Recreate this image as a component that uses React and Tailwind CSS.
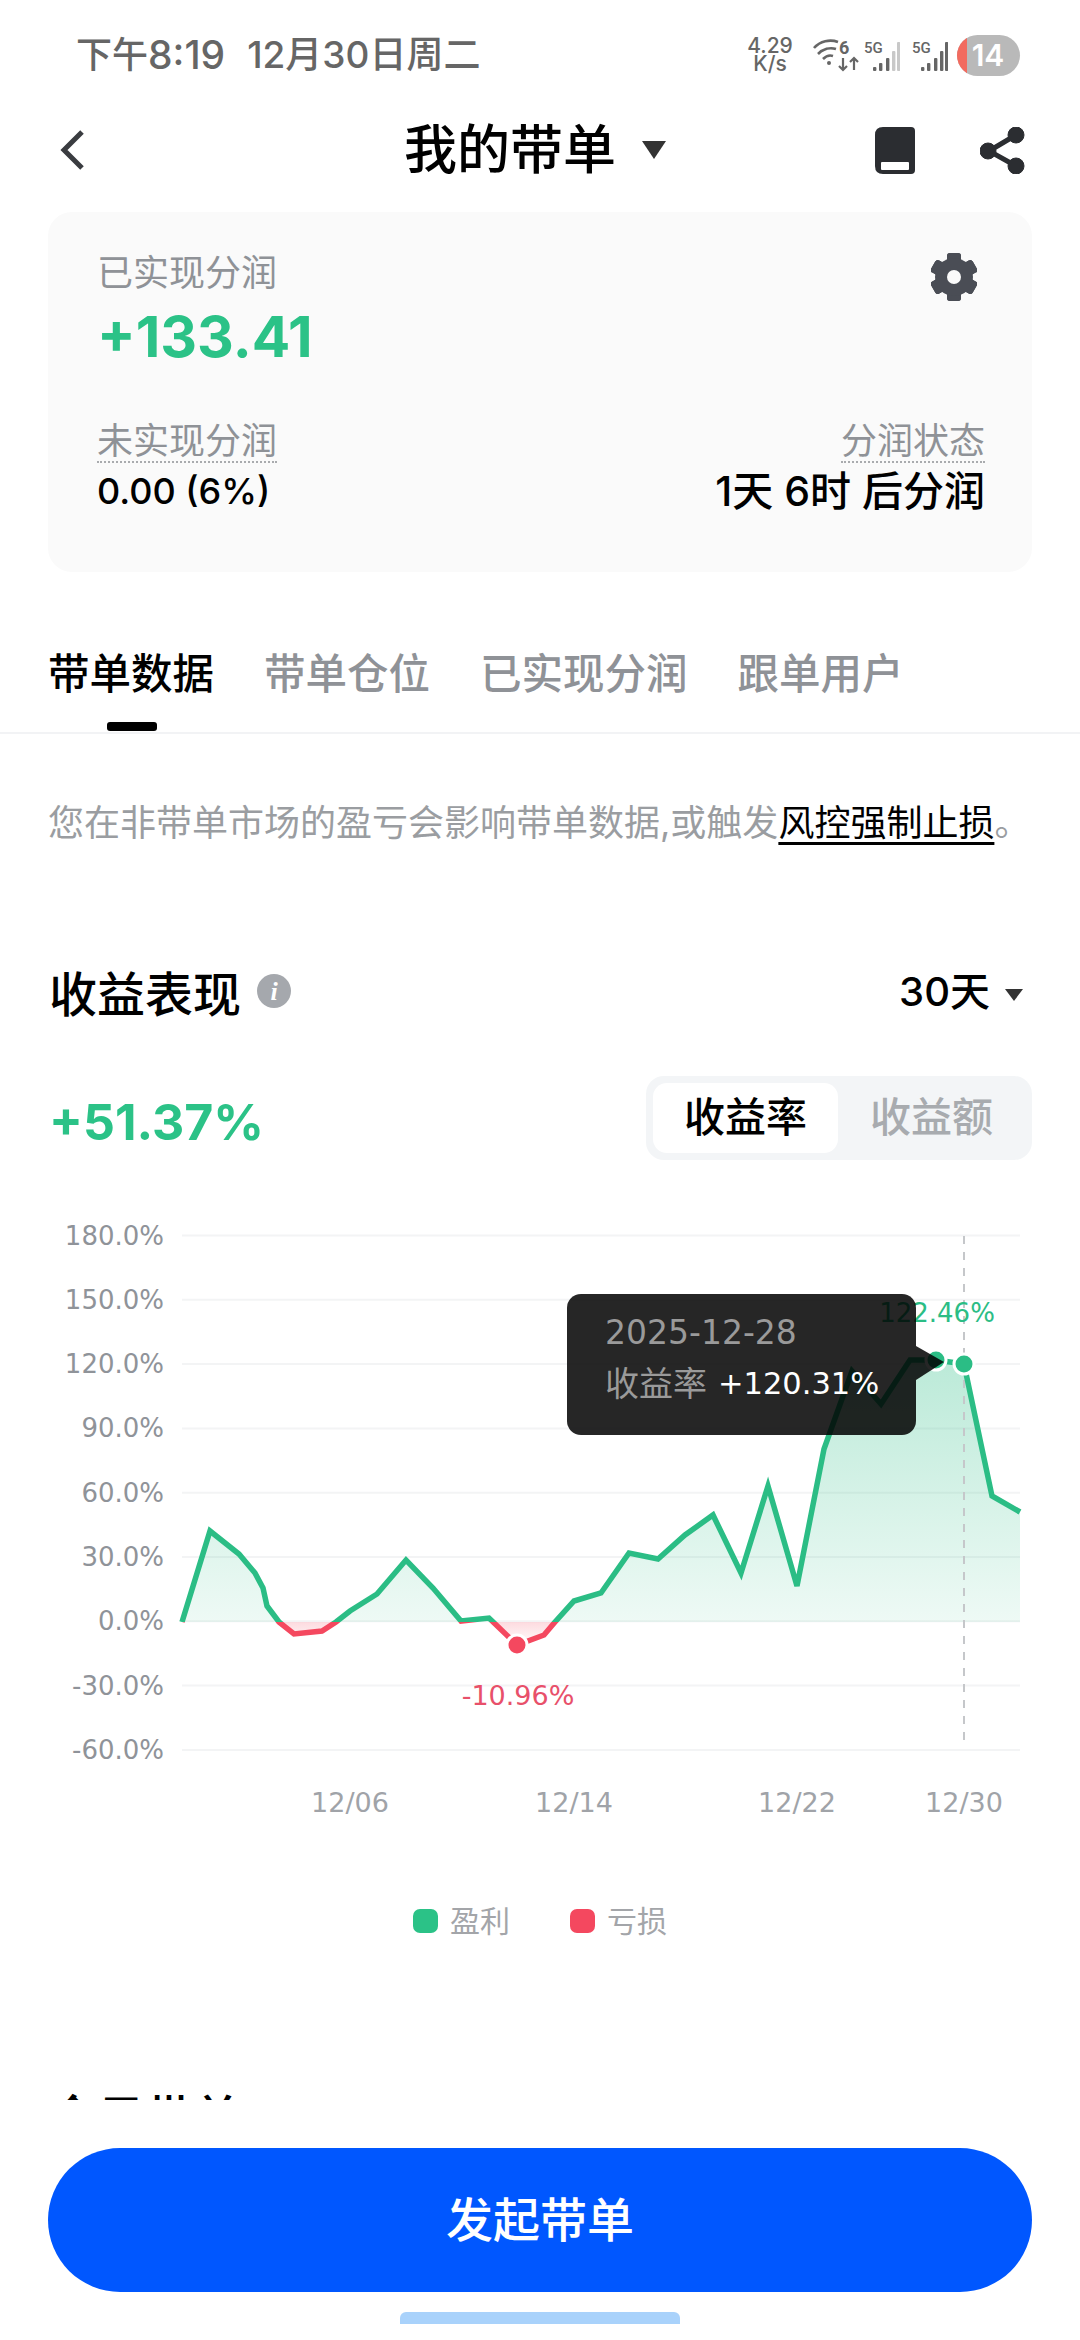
import React from 'react';

const GREEN = '#2bbd85';
const RED = '#f4485f';

const points = [
  [182, 1622], [210, 1531], [239, 1554], [255, 1573], [263, 1588], [267, 1606], [279, 1622],
  [294, 1634], [322, 1631], [336, 1622], [350, 1611], [377, 1594], [406, 1560], [433, 1588],
  [461, 1621], [489, 1618], [517, 1645], [544, 1635], [555, 1622], [574, 1601], [601, 1593],
  [629, 1553], [658, 1559], [685, 1535], [713, 1515], [741, 1573], [768, 1486], [797, 1586],
  [824, 1449], [852, 1371], [881, 1404], [910, 1360], [936, 1360], [964, 1364], [992, 1496],
  [1020, 1512],
];

const yLabels = ['180.0%', '150.0%', '120.0%', '90.0%', '60.0%', '30.0%', '0.0%', '-30.0%', '-60.0%'];
const xLabels = [['12/06', 350], ['12/14', 574], ['12/22', 797], ['12/30', 964]];

function SignalIcon({ dim }) {
  const bars = [[9, 4], [15, 8], [22, 13], [28, 20], [33, 29]];
  return (
    <svg width="36" height="32" viewBox="0 0 36 32">
      <text x="0" y="14" fontSize="15" fontWeight="500" fill="#666" fontFamily="Roboto">5G</text>
      {bars.map(([x, h], i) => (
        <rect key={x} x={x} y={32 - h} width="3.4" height={h} rx="1" fill={dim && i > 2 ? '#c8c8c8' : '#666'} />
      ))}
    </svg>
  );
}

function WifiIcon() {
  return (
    <svg width="47" height="34" viewBox="0 0 47 34" fill="none" stroke="#666" strokeWidth="2.6">
      <path d="M1 10C7 3 17 1 25 4" />
      <path d="M5 16C10 11 17 9 23 11" />
      <path d="M10 21C13 18 17 17 20 18" />
      <circle cx="16" cy="25" r="2" fill="#666" stroke="none" />
      <text x="26" y="16" fontSize="18" fontWeight="700" fill="#666" stroke="none" fontFamily="Roboto">6</text>
      <path d="M30 20V32M26 28L30 32L34 28" strokeWidth="2.2" />
      <path d="M41 32V20M37 24L41 20L45 24" strokeWidth="2.2" />
    </svg>
  );
}

function GearIcon() {
  const angles = [0, 60, 120, 180, 240, 300];
  return (
    <svg width="46" height="48" viewBox="0 0 46 48" className="mr-[8px]">
      {angles.map((a) => (
        <rect key={a} x="16" y="0" width="14" height="48" rx="3" fill="#4a4d55" transform={`rotate(${a} 23 24)`} />
      ))}
      <circle cx="23" cy="24" r="19" fill="#4a4d55" />
      <circle cx="23" cy="24" r="7" fill="#fafafa" />
    </svg>
  );
}

function Chart() {
  const line = points.map((p) => p.join(',')).join(' ');
  const area = `182,1622 ${line} 1020,1622`;
  return (
    <div className="relative mt-[40px] h-[640px]">
      <svg width="1080" height="640" viewBox="0 1200 1080 640" fontFamily="'DejaVu Sans', sans-serif">
        <defs>
          <linearGradient id="gainFill" gradientUnits="userSpaceOnUse" x1="0" y1="1360" x2="0" y2="1622">
            <stop offset="0" stopColor={GREEN} stopOpacity="0.32" />
            <stop offset="1" stopColor={GREEN} stopOpacity="0.08" />
          </linearGradient>
          <linearGradient id="lossFill" gradientUnits="userSpaceOnUse" x1="0" y1="1622" x2="0" y2="1646">
            <stop offset="0" stopColor={RED} stopOpacity="0.2" />
            <stop offset="1" stopColor={RED} stopOpacity="0" />
          </linearGradient>
          <clipPath id="above">
            <rect x="170" y="1200" width="860" height="422" />
          </clipPath>
          <clipPath id="below">
            <rect x="170" y="1622" width="860" height="100" />
          </clipPath>
        </defs>

        {yLabels.map((label, i) => {
          const y = 1235.5 + i * 64.3;
          return (
            <g key={label}>
              <line x1="182" x2="1020" y1={y} y2={y} stroke="#f3f4f5" strokeWidth="2" />
              <text x="164" y={y + 9} textAnchor="end" fontSize="26" fill="#8f9399">{label}</text>
            </g>
          );
        })}

        <polygon points={area} fill="url(#gainFill)" clipPath="url(#above)" />
        <polygon points={area} fill="url(#lossFill)" clipPath="url(#below)" />
        <line x1="964" x2="964" y1="1236" y2="1744" stroke="#c5c7ca" strokeWidth="2" strokeDasharray="8 8" />
        <polyline points={line} fill="none" stroke={GREEN} strokeWidth="5.5" clipPath="url(#above)" />
        <polyline points={line} fill="none" stroke={RED} strokeWidth="5.5" clipPath="url(#below)" />

        <circle cx="517" cy="1645" r="10" fill={RED} stroke="#fff" strokeWidth="3" />
        <circle cx="936" cy="1360" r="10" fill={GREEN} stroke="#fff" strokeWidth="3" />
        <circle cx="964" cy="1364" r="10" fill={GREEN} stroke="#fff" strokeWidth="3" />

        <text x="518" y="1705" textAnchor="middle" fontSize="27" fill="#e8506a">-10.96%</text>
        <text x="937" y="1322" textAnchor="middle" fontSize="26" fill={GREEN}>122.46%</text>

        {xLabels.map(([label, x]) => (
          <text key={label} x={x} y="1812" textAnchor="middle" fontSize="27" fill="#a0a3a8">{label}</text>
        ))}
      </svg>

      {/* tooltip sits over the line */}
      <div className="absolute left-[567px] top-[94px] flex h-[141px] w-[349px] flex-col justify-center rounded-[14px] bg-black/85 pb-[12px] pl-[38px]">
        <div className="font-['DejaVu_Sans',sans-serif] text-[33px] leading-[50px] text-[#9a9a9a]">2025-12-28</div>
        <div className="flex items-center text-[34px] leading-[52px] text-[#9a9a9a]">
          <span className="mr-[11px]">收益率</span>
          <span className="font-['DejaVu_Sans',sans-serif] text-[30.5px] text-white">+120.31%</span>
        </div>
        <svg width="28" height="34" viewBox="0 0 28 34" className="absolute left-[349px] top-[52px]">
          <path d="M0 0L28 16L0 34Z" fill="#000" fillOpacity="0.85" />
        </svg>
      </div>
    </div>
  );
}

export default function App() {
  return (
    <div className="relative h-[2340px] w-[1080px] overflow-hidden bg-white font-['Inter','Noto_Sans_CJK_SC',sans-serif]">
      <div className="h-[2100px] overflow-hidden">
        {/* status bar */}
        <div className="flex h-[110px] items-center justify-between pl-[76px] pr-[60px]">
          <div className="flex items-center whitespace-nowrap text-[36px] font-medium text-[#666]">
            <span>下午</span>
            <span className="text-[39px]">8:19</span>
            <span className="ml-[22px] text-[37px]">12月30日周二</span>
          </div>
          <div className="flex items-center text-[#666]">
            <div className="mr-[22px] flex w-[42px] flex-col items-center text-[21px] font-medium leading-[18px]">
              <span>4.29</span>
              <span>K/s</span>
            </div>
            <WifiIcon />
            <div className="ml-[4px]"><SignalIcon dim /></div>
            <div className="ml-[12px]"><SignalIcon /></div>
            <div className="ml-[9px] flex h-[41px] w-[63px] items-center overflow-hidden rounded-full bg-[#b9b9b9]">
              <div className="h-full w-[10px] bg-[#f26b5f]" />
              <span className="w-[42px] text-center text-[30px] font-semibold text-white">14</span>
            </div>
          </div>
        </div>

        {/* nav */}
        <div className="flex h-[80px] items-center pl-[60px] pr-[54px]">
          <svg width="24" height="40" viewBox="0 0 24 40" fill="none" stroke="#3a3c40" strokeWidth="5">
            <path d="M22 2L4 20L22 38" />
          </svg>
          <div className="ml-[320px] text-[53px] font-medium leading-[80px] text-black">我的带单</div>
          <svg width="24" height="18" viewBox="0 0 24 18" className="ml-[26px]">
            <path d="M0 0H24L12 18Z" fill="#333" />
          </svg>
          <svg width="40" height="47" viewBox="0 0 40 47" className="ml-auto">
            <path d="M8 0H36Q40 0 40 4V43Q40 47 36 47H8Q0 47 0 39V8Q0 0 8 0Z" fill="#2b2d31" />
            <rect x="6" y="35" width="28" height="8" rx="1" fill="#fff" />
          </svg>
          <svg width="46" height="47" viewBox="0 0 46 47" className="ml-[65px]" fill="#2b2d31" stroke="#2b2d31">
            <path d="M36 8L9 24L36 39" fill="none" strokeWidth="5" />
            <circle cx="36" cy="8" r="8" />
            <circle cx="8" cy="24" r="8" />
            <circle cx="36" cy="39" r="8" />
          </svg>
        </div>

        {/* profit card */}
        <div className="mx-[48px] mt-[22px] h-[360px] rounded-[24px] bg-[#fafafa] pl-[49px] pr-[47px] pt-[41px]">
          <div className="flex items-start justify-between">
            <div>
              <div className="text-[36px] leading-[40px] text-[#8f9297]">已实现分润</div>
              <div className="mt-[12px] text-[57px] font-bold leading-[64px] text-[#2bc287]">+133.41</div>
            </div>
            <GearIcon />
          </div>
          <div className="mt-[52px] flex items-start justify-between">
            <div>
              <div className="border-b-2 border-dotted border-[#a9abae] text-[36px] leading-[40px] text-[#8f9297]">未实现分润</div>
              <div className="mt-[4px] text-[36px] font-medium leading-[48px] text-black">0.00 (6%)</div>
            </div>
            <div className="flex flex-col items-end">
              <div className="border-b-2 border-dotted border-[#a9abae] text-[36px] leading-[40px] text-[#8f9297]">分润状态</div>
              <div className="mt-[4px] text-[41px] font-medium leading-[48px] text-black">1天 6时 后分润</div>
            </div>
          </div>
        </div>

        {/* tabs */}
        <div className="mt-[72px] border-b-2 border-[#f2f3f5] pb-[1px]">
          <div className="flex gap-[50px] pl-[48px] text-[41.5px] font-medium leading-[60px] text-[#8f9297]">
            <span className="text-black">带单数据</span>
            <span>带单仓位</span>
            <span>已实现分润</span>
            <span>跟单用户</span>
          </div>
          <div className="ml-[107px] mt-[18px] h-[9px] w-[50px] rounded-[3px] bg-black" />
        </div>

        <div className="mt-[64px] whitespace-nowrap pl-[48px] text-[36px] leading-[50px] text-[#9a9da1]">
          您在非带单市场的盈亏会影响带单数据,或触发<span className="text-black underline underline-offset-[6px]">风控强制止损</span>。
        </div>

        {/* performance */}
        <div className="mt-[117px] flex h-[60px] items-center justify-between pl-[49px] pr-[57px]">
          <div className="flex items-center">
            <span className="text-[48px] font-medium leading-[60px] text-black">收益表现</span>
            <span className="mb-[8px] ml-[16px] flex h-[34px] w-[34px] items-center justify-center rounded-full bg-[#a5a8ad] font-['Liberation_Serif',serif] text-[26px] font-bold italic text-white">i</span>
          </div>
          <div className="flex items-center">
            <span className="mb-[6px] text-[40px] font-medium text-black">30天</span>
            <svg width="18" height="12" viewBox="0 0 18 12" className="ml-[15px]">
              <path d="M0 0H18L9 12Z" fill="#333" />
            </svg>
          </div>
        </div>

        <div className="mt-[51px] flex items-center justify-between pl-[49px] pr-[48px]">
          <span className="pt-[8px] text-[50px] font-bold text-[#2bc287]">+51.37%</span>
          <div className="flex h-[84px] w-[386px] items-center rounded-[18px] bg-[#f3f5f7] p-[7px] text-[41px] font-medium">
            <span className="flex h-[70px] w-[185px] items-center justify-center rounded-[14px] bg-white text-black">收益率</span>
            <span className="flex-1 text-center text-[#a8abaf]">收益额</span>
          </div>
        </div>

        <Chart />

        <div className="mt-[66px] flex h-[30px] items-center justify-center text-[30px] leading-[30px] text-[#a3a5a9]">
          <span className="h-[24px] w-[25px] rounded-[7px] bg-[#2bc287]" />
          <span className="ml-[12px]">盈利</span>
          <span className="ml-[60px] h-[24px] w-[25px] rounded-[7px] bg-[#f4485f]" />
          <span className="ml-[12px]">亏损</span>
        </div>

        {/* next section, cut off by the footer */}
        <div className="mt-[152px] flex h-[60px] items-center justify-between pl-[49px] pr-[94px] text-black">
          <span className="text-[48px] font-medium leading-[60px]">今日带单</span>
          <span className="text-[36px] font-medium leading-[60px]">五</span>
        </div>
      </div>

      {/* footer */}
      <div className="mx-[48px] mt-[48px] flex h-[144px] items-center justify-center rounded-full bg-[#0057ff] text-[47px] font-medium text-white">
        发起带单
      </div>
      <div className="mx-auto mt-[20px] h-[12px] w-[280px] rounded-t-[6px] bg-[#a9d2fb]" />
    </div>
  );
}
